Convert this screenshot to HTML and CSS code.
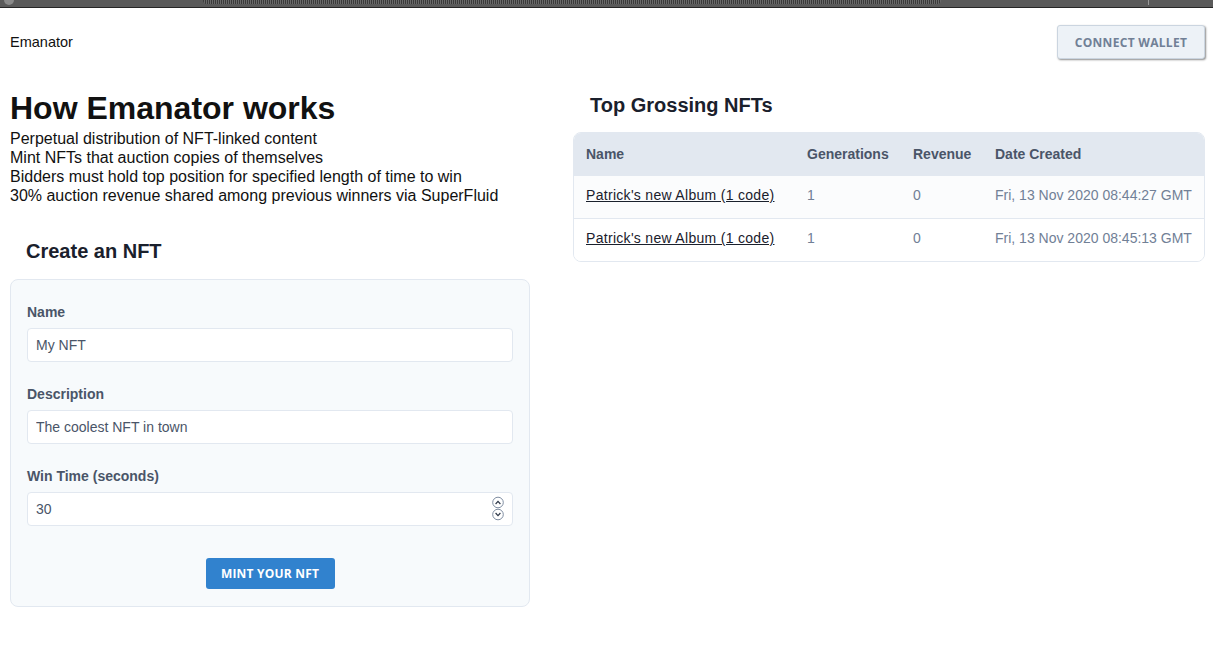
FILE: index.html
```html
<!DOCTYPE html>
<html lang="en">
<head>
<meta charset="utf-8">
<title>Emanator</title>
<link rel="stylesheet" href="styles.css">
</head>
<body>
<div class="chrome">
  <div class="chrome-icon"></div>
  <div class="chrome-bar"></div>
  <div class="chrome-sep"></div>
</div>
<div class="page">
  <header class="topbar">
    <span class="brand">Emanator</span>
    <button class="connect" type="button">Connect Wallet</button>
  </header>
  <main class="columns">
    <section class="left">
      <h1 class="hero">How Emanator works</h1>
      <div class="intro">
        <div>Perpetual distribution of NFT-linked content</div>
        <div>Mint NFTs that auction copies of themselves</div>
        <div>Bidders must hold top position for specified length of time to win</div>
        <div>30% auction revenue shared among previous winners via SuperFluid</div>
      </div>
      <h2 class="section-title">Create an NFT</h2>
      <form class="card">
        <div class="field">
          <label class="label" for="name">Name</label>
          <input class="input" id="name" type="text" value="My NFT">
        </div>
        <div class="field">
          <label class="label" for="desc">Description</label>
          <input class="input" id="desc" type="text" value="The coolest NFT in town">
        </div>
        <div class="field last">
          <label class="label" for="win">Win Time (seconds)</label>
          <div class="number-wrap">
            <input class="input" id="win" type="text" value="30">
            <span class="spinner">
              <svg width="12" height="25" viewBox="0 0 12 25">
                <circle cx="6" cy="6.5" r="5.3" fill="#fff" stroke="#718096" stroke-width="0.9"/>
                <circle cx="6" cy="18.5" r="5.3" fill="#fff" stroke="#718096" stroke-width="0.9"/>
                <path d="M3.6 8 L6 5.4 L8.4 8" fill="none" stroke="#2d3748" stroke-width="1.2"/>
                <path d="M3.6 17 L6 19.6 L8.4 17" fill="none" stroke="#2d3748" stroke-width="1.2"/>
              </svg>
            </span>
          </div>
        </div>
        <div class="actions">
          <button class="mint" type="button">Mint your NFT</button>
        </div>
      </form>
    </section>
    <section class="right">
      <h2 class="section-title table-title">Top Grossing NFTs</h2>
      <div class="table-wrap">
        <table class="nft-table">
          <colgroup>
            <col class="c-name"><col class="c-gen"><col class="c-rev"><col class="c-date">
          </colgroup>
          <thead>
            <tr><th>Name</th><th>Generations</th><th>Revenue</th><th>Date Created</th></tr>
          </thead>
          <tbody>
            <tr>
              <td><a class="nft-link" href="#">Patrick's new Album (1 code)</a></td>
              <td>1</td><td>0</td><td>Fri, 13 Nov 2020 08:44:27 GMT</td>
            </tr>
            <tr>
              <td><a class="nft-link" href="#">Patrick's new Album (1 code)</a></td>
              <td>1</td><td>0</td><td>Fri, 13 Nov 2020 08:45:13 GMT</td>
            </tr>
          </tbody>
        </table>
      </div>
    </section>
  </main>
</div>
</body>
</html>
```
FILE: styles.css
```css
* { box-sizing: border-box; }
html, body { margin: 0; padding: 0; background: #fff; }
body { font-family: "Liberation Sans", Arial, sans-serif; color: #111; }

.chrome {
  height: 8px;
  background: #5a5a5a;
  border-bottom: 1px solid #262626;
  display: flex;
  align-items: flex-start;
}
.chrome-icon {
  width: 10px; height: 5px; margin-left: 4px;
  background: #8a8a8a; border-radius: 0 0 5px 5px;
}
.chrome-bar {
  margin-left: 189px;
  width: 738px; height: 4px;
  background: repeating-linear-gradient(90deg, #3a3a3a 0 1px, #6a6a6a 1px 2px);
  border-radius: 0 0 4px 4px;
}
.chrome-sep {
  margin-left: 207px; width: 1px; height: 5px; background: #9a9a9a;
}

.page { padding: 0 8px 0 10px; }

.topbar {
  display: flex;
  justify-content: space-between;
  align-items: center;
  padding-top: 17px;
}
.brand { font-size: 14.5px; color: #111; }
.connect {
  width: 148px; height: 34px;
  border: 1px solid #cbd5e0;
  border-radius: 3px;
  background: #edf2f7;
  box-shadow: 1px 1px 2px rgba(0,0,0,0.45);
  color: #718096;
  font-family: "Open Sans", "Noto Sans", sans-serif;
  font-weight: 700;
  font-size: 12px;
  letter-spacing: 0.3px;
  text-transform: uppercase;
  padding: 0;
}

.columns {
  display: grid;
  grid-template-columns: 520px 632px;
  column-gap: 43px;
  align-items: start;
}

.hero {
  margin: 31px 0 2px;
  font-size: 32px;
  font-weight: 700;
  line-height: normal;
  color: #111;
}
.intro { font-size: 16px; line-height: 19px; color: #111; }

.section-title {
  font-family: "Liberation Sans", Arial, sans-serif;
  font-weight: 700;
  font-size: 20px;
  line-height: 24px;
  color: #1a202c;
  margin: 34px 0 16px;
  padding-left: 16px;
}
.table-title { margin: 34px 0 15px; padding-left: 17px; }

.card {
  background: #f7fafc;
  border: 1px solid #e2e8f0;
  border-radius: 8px;
  padding: 22px 16px 17px;
}
.field { margin-bottom: 22px; }
.field.last { margin-bottom: 32px; }
.label {
  display: block;
  font-family: "Liberation Sans", Arial, sans-serif;
  font-weight: 700;
  font-size: 14px;
  line-height: 20px;
  color: #4a5568;
  margin-bottom: 6px;
}
.input {
  display: block;
  width: 100%;
  height: 34px;
  border: 1px solid #e2e8f0;
  border-radius: 4px;
  background: #fff;
  padding: 0 8px;
  font-family: "Liberation Sans", Arial, sans-serif;
  font-size: 14px;
  color: #4a5568;
  outline: none;
}
.number-wrap { position: relative; }
.spinner {
  position: absolute;
  right: 9px; top: 4px;
  width: 12px; height: 25px;
  display: block;
}
.spinner svg { display: block; }

.actions { display: flex; justify-content: center; }
.mint {
  width: 129px; height: 31px;
  border: none;
  border-radius: 3px;
  background: #3182ce;
  color: #fff;
  font-family: "Open Sans", "Noto Sans", sans-serif;
  font-weight: 700;
  font-size: 12px;
  letter-spacing: 0.2px;
  text-transform: uppercase;
  padding: 0;
}

.table-wrap {
  border: 1px solid #e2e8f0;
  border-radius: 8px;
  overflow: hidden;
}
.nft-table {
  width: 100%;
  border-collapse: collapse;
  table-layout: fixed;
  font-family: "Liberation Sans", Arial, sans-serif;
  font-size: 14px;
}
.c-name { width: 221px; }
.c-gen { width: 106px; }
.c-rev { width: 82px; }
.c-date { width: auto; }
.nft-table th {
  background: #e2e8f0;
  height: 42px;
  text-align: left;
  font-weight: 700;
  color: #4a5568;
  padding: 0 0 0 12px;
}
.nft-table td {
  height: 43px;
  padding: 0 0 3px 12px;
  color: #718096;
  border-top: 1px solid #e2e8f0;
  background: #fbfcfd;
  white-space: nowrap;
}
.nft-table tbody tr:last-child td { background: #fff; }
.nft-link { color: #1a202c; text-decoration: underline; letter-spacing: 0.3px; }
```
